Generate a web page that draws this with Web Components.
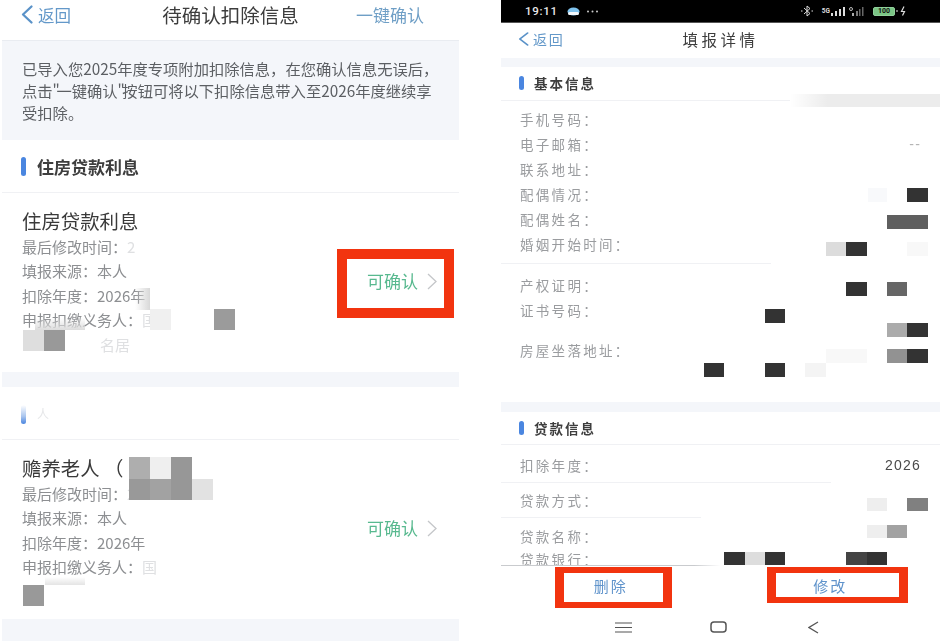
<!DOCTYPE html>
<html lang="zh-CN">
<head>
<meta charset="utf-8">
<title>待确认扣除信息</title>
<style>
html,body{margin:0;padding:0;background:#fff}
body{font-family:"Noto Sans CJK SC","Noto Sans",sans-serif;overflow:hidden}
</style>
</head>
<body>
<screen-pair>
  <confirm-panel>
    <app-nav back-size="16.5" title-size="19.5" height="40" label="待确认扣除信息" action="一键确认"></app-nav>
    <notice-box>已导入您2025年度专项附加扣除信息，在您确认信息无误后，<br>点击<span style="letter-spacing:-3.5px">"</span>一键确认<span style="letter-spacing:-3.5px">"</span>&#8202;按钮可将以下扣除信息带入至2026年度继续享<br>受扣除。</notice-box>
    <section-head size="17" height="52">住房贷款利息</section-head>
    <deduct-card heading="住房贷款利息" marked>
      <meta-line>最后修改时间：<faint-text>2</faint-text></meta-line>
      <meta-line>填报来源：本人</meta-line>
      <meta-line>扣除年度：2026年</meta-line>
      <meta-line>申报扣缴义务人：<faint-text>国</faint-text></meta-line>
      <meta-line><faint-text pad="78">名居</faint-text></meta-line>
    </deduct-card>
    <gap-band height="15"></gap-band>
    <section-head size="12" height="52" faded>人</section-head>
    <deduct-card heading="赡养老人 （">
      <meta-line>最后修改时间：<faint-text>2</faint-text></meta-line>
      <meta-line>填报来源：本人</meta-line>
      <meta-line>扣除年度：2026年</meta-line>
      <meta-line>申报扣缴义务人：<faint-text>国</faint-text></meta-line>
    </deduct-card>
    <gap-band height="22"></gap-band>

    <mosaic-cell x="135" y="288" w="15" h="22" c="linear-gradient(90deg,#fff0,#d8d8d8)"></mosaic-cell>
    <mosaic-cell x="35" y="318" w="50" h="12" c="linear-gradient(180deg,#fff0,#dcdcdc)"></mosaic-cell>
    <mosaic-cell x="150" y="309" w="21" h="21" c="#f0f0f0"></mosaic-cell>
    <mosaic-cell x="214" y="309" w="21" h="21" c="#9b9b9b"></mosaic-cell>
    <mosaic-cell x="23" y="330" w="21" h="21" c="#dedede"></mosaic-cell>
    <mosaic-cell x="44" y="330" w="21" h="21" c="#999"></mosaic-cell>
    <mosaic-cell x="129" y="457" w="21" h="22" c="#aeaeae"></mosaic-cell>
    <mosaic-cell x="150" y="457" w="21" h="22" c="#efefef"></mosaic-cell>
    <mosaic-cell x="171" y="457" w="21" h="22" c="#979797"></mosaic-cell>
    <mosaic-cell x="129" y="479" w="21" h="21" c="#999"></mosaic-cell>
    <mosaic-cell x="150" y="479" w="21" h="21" c="#a2a2a2"></mosaic-cell>
    <mosaic-cell x="171" y="479" w="21" h="21" c="#979797"></mosaic-cell>
    <mosaic-cell x="192" y="479" w="21" h="21" c="#e2e2e2"></mosaic-cell>
    <mosaic-cell x="45" y="577" w="40" h="8" c="linear-gradient(180deg,#fff0,#e4e4e4)"></mosaic-cell>
    <mosaic-cell x="23" y="585" w="21" h="21" c="#999"></mosaic-cell>
  </confirm-panel>

  <detail-panel>
    <status-strip></status-strip>
    <app-nav back-size="14" title-size="15.5" height="35" label="填报详情" spaced></app-nav>
    <gap-band height="9"></gap-band>
    <detail-scroll>
      <section-head size="13.5" height="34" spaced up>基本信息</section-head>
      <detail-row before="5">手机号码：</detail-row>
      <detail-row value="--">电子邮箱：</detail-row>
      <detail-row>联系地址：</detail-row>
      <detail-row>配偶情况：</detail-row>
      <detail-row>配偶姓名：</detail-row>
      <detail-row>婚姻开始时间：</detail-row>
      <thin-rule before="7" after="8" width="270"></thin-rule>
      <detail-row>产权证明：</detail-row>
      <detail-row>证书号码：</detail-row>
      <detail-row before="15">房屋坐落地址：</detail-row>
      <gap-band before="40" height="10"></gap-band>
      <section-head size="13.5" height="32" spaced>贷款信息</section-head>
      <detail-row before="7">扣除年度：<span slot="value">2026</span></detail-row>
      <thin-rule before="5" after="4" width="330"></thin-rule>
      <detail-row>贷款方式：</detail-row>
      <thin-rule before="5" after="5" width="200"></thin-rule>
      <detail-row>贷款名称：</detail-row>
      <detail-row before="-2">贷款银行：</detail-row>
    </detail-scroll>
    <action-footer>
      <footer-button box="-9 -61 -7 -46">修改</footer-button>
      <footer-button slot="first" box="-9 -44 -12 -39">删除</footer-button>
    </action-footer>
    <system-nav></system-nav>

    <mosaic-cell x="790" y="94" w="150" h="13" c="linear-gradient(90deg,#fff,#ececec 25%,#ececec 100%)" origin="501"></mosaic-cell>
    <mosaic-cell x="868" y="188" w="19" h="14" c="#f8f9fb" origin="501"></mosaic-cell>
    <mosaic-cell x="907" y="188" w="21" h="14" c="#333" origin="501"></mosaic-cell>
    <mosaic-cell x="887" y="215" w="41" h="14" c="#5f5f5f" origin="501"></mosaic-cell>
    <mosaic-cell x="826" y="242" w="20" h="14" c="#dcdcdc" origin="501"></mosaic-cell>
    <mosaic-cell x="846" y="242" w="21" h="14" c="#333" origin="501"></mosaic-cell>
    <mosaic-cell x="907" y="242" w="21" h="14" c="#f8f8f8" origin="501"></mosaic-cell>
    <mosaic-cell x="846" y="282" w="21" h="14" c="#333" origin="501"></mosaic-cell>
    <mosaic-cell x="887" y="282" w="20" h="14" c="#666" origin="501"></mosaic-cell>
    <mosaic-cell x="765" y="309" w="20" h="14" c="#333" origin="501"></mosaic-cell>
    <mosaic-cell x="887" y="323" w="20" h="14" c="#ababab" origin="501"></mosaic-cell>
    <mosaic-cell x="907" y="323" w="21" h="14" c="#333" origin="501"></mosaic-cell>
    <mosaic-cell x="826" y="349" w="41" h="14" c="#f8f8f8" origin="501"></mosaic-cell>
    <mosaic-cell x="887" y="349" w="20" h="14" c="#929292" origin="501"></mosaic-cell>
    <mosaic-cell x="907" y="349" w="21" h="14" c="#333" origin="501"></mosaic-cell>
    <mosaic-cell x="704" y="363" w="20" h="14" c="#333" origin="501"></mosaic-cell>
    <mosaic-cell x="765" y="363" w="20" h="14" c="#333" origin="501"></mosaic-cell>
    <mosaic-cell x="805" y="363" w="21" h="14" c="#f4f4f4" origin="501"></mosaic-cell>
    <mosaic-cell x="867" y="498" w="20" h="13" c="#eeeeee" origin="501"></mosaic-cell>
    <mosaic-cell x="907" y="498" w="21" h="13" c="#808080" origin="501"></mosaic-cell>
    <mosaic-cell x="867" y="525" w="20" h="13" c="#eeeeee" origin="501"></mosaic-cell>
    <mosaic-cell x="887" y="525" w="20" h="13" c="#a2a2a2" origin="501"></mosaic-cell>
    <mosaic-cell x="724" y="552" w="21" h="13" c="#333" origin="501"></mosaic-cell>
    <mosaic-cell x="745" y="552" w="20" h="13" c="#ddd" origin="501"></mosaic-cell>
    <mosaic-cell x="765" y="552" w="20" h="13" c="#333" origin="501"></mosaic-cell>
    <mosaic-cell x="846" y="552" w="21" h="13" c="#444" origin="501"></mosaic-cell>
    <mosaic-cell x="867" y="552" w="20" h="13" c="#333" origin="501"></mosaic-cell>
  </detail-panel>
</screen-pair>

<script>
function def(name, css, html, init){
  customElements.define(name, class extends HTMLElement{
    constructor(){ super(); this.attachShadow({mode:'open'}); }
    connectedCallback(){
      const h = typeof html === 'function' ? html(this) : html;
      this.shadowRoot.innerHTML = '<style>'+css+'</style>'+h;
      if(init) init(this);
    }
  });
}
const chevL = (c,w,h,sw)=>`<svg width="${w}" height="${h}" viewBox="0 0 12 20" preserveAspectRatio="none" style="flex:none"><path d="M10.500 1.500 2 10l8.500 8.500" fill="none" stroke="${c}" stroke-width="${sw}" stroke-linecap="round" stroke-linejoin="round"/></svg>`;

def('screen-pair', `:host{display:flex;gap:42px;padding:0 2px;height:641px;box-sizing:border-box;overflow:hidden;background:#fff}`, `<slot></slot>`);
def('confirm-panel', `:host{display:flex;flex-direction:column;position:relative;width:457px;flex:none;height:641px;overflow:hidden;filter:blur(.45px)}`, `<slot></slot>`);
def('detail-panel', `:host{display:flex;flex-direction:column;position:relative;width:439px;flex:none;height:641px;overflow:hidden;filter:blur(.55px)}`, `<slot></slot>`);
def('detail-scroll', `:host{display:block;height:498px;overflow:hidden;flex:none}`, `<slot></slot>`);

def('app-nav', `
  :host{display:block;flex:none;background:#fff}
  .bar{display:grid;grid-template-columns:1fr auto 1fr;align-items:center;box-sizing:border-box}
  .back{display:flex;align-items:center;color:#6398c9}
  .t{color:#3d3d3d}
  .a{justify-self:end;color:#6f9fc6}
`, el=>{
  const big = el.getAttribute('height')==='40';
  const bs=el.getAttribute('back-size'), ts=el.getAttribute('title-size');
  const sp = el.hasAttribute('spaced');
  return `<div class="bar" style="height:${el.getAttribute('height')}px;padding-bottom:${big?14:3}px">
    <div class="back" style="font-size:${bs}px;gap:${big?5:4}px;padding-left:${big?19:17}px;${sp?'letter-spacing:1.8px':''}">${big?chevL('#5a92c8',12,19,2.2):chevL('#5a92c8',11,14,2)}<span>返回</span></div>
    <div class="t" style="font-size:${ts}px;${sp?'letter-spacing:3.5px;':''}">${el.getAttribute('label')}</div>
    <div class="a" style="font-size:17px;padding-right:${big?35:0}px">${el.getAttribute('action')||''}</div>
  </div>`;
});

def('notice-box', `:host{display:block;flex:none;box-sizing:border-box;height:100px;border-top:1px solid #e9ecf1;background:#f4f6fa;padding:16px 0 0 20px;font-size:15.3px;line-height:22px;color:#5c5f63;white-space:nowrap}`, `<slot></slot>`);

def('section-head', `
  :host{display:flex;flex:none;align-items:center;background:#fff;border-bottom:1px solid #f0f1f4;box-sizing:content-box}
  i{display:block;width:5px;height:19px;border-radius:3px;background:#4a86e0;flex:none}
  .l{color:#3e3e3e;font-weight:700}
`, el=>{
  const s=+el.getAttribute('size'), sp=el.hasAttribute('spaced'), f=el.hasAttribute('faded');
  const bar = f ? 'height:19px;background:linear-gradient(180deg,#fff,#a9c5ee 60%,#4a86e0);transform:translateY(1px)' : (sp?'height:14px;':'');
  const lab = f ? 'color:#e6e7e9;font-weight:400;' : '';
  return `<i style="${bar};margin-left:${sp?18:19}px;margin-right:${sp?10:11}px"></i><span class="l" style="${lab}font-size:${s}px;${sp?'letter-spacing:2px':''}"><slot></slot></span>`;
}, el=>{
  el.style.height = el.getAttribute('height')+'px';
  if(el.hasAttribute('up')){ el.style.boxSizing='border-box'; el.style.paddingBottom='2px'; }
});

def('deduct-card', `
  :host{display:flex;flex:none;height:179px;align-items:center;justify-content:space-between;background:#fff;box-sizing:border-box;padding-right:22px}
  .col{align-self:flex-start;padding:14px 0 0 20px}
  h3{margin:0 0 1px;font-size:19.4px;line-height:27px;font-weight:400;color:#3a3a3a;white-space:pre}
  .act{position:relative;display:flex;align-items:center;gap:9px;color:#58b98f;font-size:17px;line-height:24px;margin-bottom:3px}
  .box{position:absolute;left:-30px;right:-17px;top:-20px;bottom:-25px;border:10px solid #f2340f}
`, el=>`<div class="col"><h3>${el.getAttribute('heading')}</h3><slot></slot></div>
  <div class="act"><span>可确认</span><svg width="10" height="17" viewBox="0 0 10 17"><path d="M1 1l8 7.500L1 16" fill="none" stroke="#c4c6c9" stroke-width="1.300"/></svg>${el.hasAttribute('marked')?'<div class="box"></div>':''}</div>`);

def('meta-line', `:host{display:block;font-size:15px;line-height:24.4px;color:#8d8f92;white-space:nowrap}`, `<slot></slot>`);
def('faint-text', `:host{color:#dfe0e2}`, `<slot></slot>`, el=>{ if(el.hasAttribute('pad')){ el.style.marginLeft=el.getAttribute('pad')+'px'; } });

def('gap-band', `:host{display:block;flex:none;background:#f4f6fa}`, ``, el=>{
  el.style.height=el.getAttribute('height')+'px';
  if(el.hasAttribute('before')) el.style.marginTop=el.getAttribute('before')+'px';
});

def('mosaic-cell', `:host{display:block;position:absolute}`, ``, el=>{
  const o=+(el.getAttribute('origin')||2);
  Object.assign(el.style,{left:(el.getAttribute('x')-o)+'px',top:el.getAttribute('y')+'px',width:el.getAttribute('w')+'px',height:el.getAttribute('h')+'px',background:el.getAttribute('c')});
});

def('status-strip', `
  :host{display:flex;flex:none;align-items:center;justify-content:space-between;height:23px;background:#000;color:#e8e8e8;box-sizing:border-box;padding:0 0 0 24px;border-bottom:1px solid #555}
  .l,.r{display:flex;align-items:center}
  .t{font:500 11.5px "Roboto",sans-serif;letter-spacing:.7px}
  .r{margin-right:33px;gap:4px}
  .g{font:700 6.5px "Roboto",sans-serif;line-height:6px;color:#ddd}
  .b{display:flex;align-items:center;justify-content:center;box-sizing:border-box;width:22px;height:9px;border:1px solid #8fd09a;border-radius:2px;font:700 7px "Roboto",sans-serif;color:#111;background:#7bc585}
`, `<div class="l"><span class="t">19:11</span>
    <svg width="13" height="9" viewBox="0 0 13 9" style="margin-left:9px"><ellipse cx="6.500" cy="4.500" rx="6" ry="4" fill="#7fc3ee"/><rect x="1" y="5" width="11" height="3" rx="1.500" fill="#f4f8fb"/></svg>
    <svg width="13" height="3" viewBox="0 0 13 3" style="margin-left:6px"><circle cx="2" cy="1.500" r="1" fill="#ccc"/><circle cx="6.500" cy="1.500" r="1" fill="#ccc"/><circle cx="11" cy="1.500" r="1" fill="#ccc"/></svg>
  </div>
  <div class="r">
    <svg width="14" height="12" viewBox="0 0 14 12" style="margin-right:4px"><path d="M4 3l6 5.500L7 11V1l3 2.500L4 9M1 6h1.500M11.500 6H13" fill="none" stroke="#ddd" stroke-width="1"/></svg>
    <span class="g">5G</span>
    <svg width="14" height="9" viewBox="0 0 14 9" style="margin-left:-3px"><rect x="0" y="6" width="2" height="3" fill="#ddd"/><rect x="4" y="4" width="2" height="5" fill="#ddd"/><rect x="8" y="2" width="2" height="7" fill="#ddd"/><rect x="12" y="0" width="2" height="9" fill="#ddd"/></svg>
    <svg width="16" height="9" viewBox="0 0 16 9"><circle cx="2" cy="2" r="1.500" fill="none" stroke="#bbb"/><rect x="3" y="6" width="2" height="3" fill="#aaa"/><rect x="7" y="4" width="2" height="5" fill="#777"/><rect x="10" y="2" width="1.500" height="7" fill="#666"/><rect x="13" y="0" width="1.500" height="9" fill="#666"/></svg>
    <span class="b" style="margin-left:4px">100</span>
    <svg width="11" height="10" viewBox="0 0 11 10" style="margin-left:-3px"><circle cx="1" cy="5" r=".9" fill="#aaa"/><path d="M8 .5 5.500 5.500h3L6.500 9.500" fill="none" stroke="#ddd" stroke-width="1.200"/></svg>
  </div>`);

def('detail-row', `
  :host{display:flex;flex:none;justify-content:space-between;align-items:center;height:25px;box-sizing:border-box;padding:0 19px 0 19px;background:#fff}
  .k{font-size:13.5px;letter-spacing:2.3px;color:#9a9c9f;white-space:nowrap}
  .v{font:400 14px "Liberation Sans",sans-serif;letter-spacing:1.2px;color:#4a4a4a}
  .n{color:#b5b5b5}
`, el=>`<span class="k"><slot></slot></span><span class="v ${el.getAttribute('value')?'n':''}"><slot name="value">${el.getAttribute('value')||''}</slot></span>`,
 el=>{ if(el.hasAttribute('before')) el.style.marginTop=el.getAttribute('before')+'px'; });

def('thin-rule', `:host{display:block;height:1px;background:#f0f1f4;flex:none}`, ``, el=>{
  el.style.width=el.getAttribute('width')+'px';
  el.style.marginTop=el.getAttribute('before')+'px';
  el.style.marginBottom=el.getAttribute('after')+'px';
});

def('action-footer', `
  :host{display:grid;grid-template-columns:1fr 1fr;flex:none;height:45px;align-items:center;justify-items:center;background:linear-gradient(90deg,#c9cbce 44%,#fff 50%) top/100% 1px no-repeat #fff;box-sizing:border-box;padding-bottom:4px}
`, `<slot name="first"></slot><slot></slot>`);

def('footer-button', `
  :host{display:block;position:relative;font-size:15px;line-height:20px;letter-spacing:2px;color:#5f93cb}
  .box{position:absolute;border-style:solid;border-color:#f2340f;border-width:6px 9px}
`, el=>{
  const [t,r,b,l]=el.getAttribute('box').split(' ');
  return `<slot></slot><div class="box" style="top:${t}px;right:${r}px;bottom:${b}px;left:${l}px"></div>`;
});

def('system-nav', `
  :host{display:grid;grid-template-columns:95px 95px 95px;justify-content:center;align-items:center;flex:1;padding:3px 5px 0 0;background:#fff}
  svg{justify-self:center}
`, `<svg width="17" height="11" viewBox="0 0 17 11"><path d="M0 1h17M0 5.500h17M0 10h17" stroke="#555" stroke-width="1.200"/></svg>
  <svg width="17" height="12" viewBox="0 0 17 12"><rect x="1" y="1" width="15" height="10" rx="3" fill="none" stroke="#555" stroke-width="1.500"/></svg>
  <svg width="11" height="13" viewBox="0 0 11 13"><path d="M10 1 1 6.500 10 12" fill="none" stroke="#555" stroke-width="1.300"/></svg>`);
</script>
</body>
</html>
